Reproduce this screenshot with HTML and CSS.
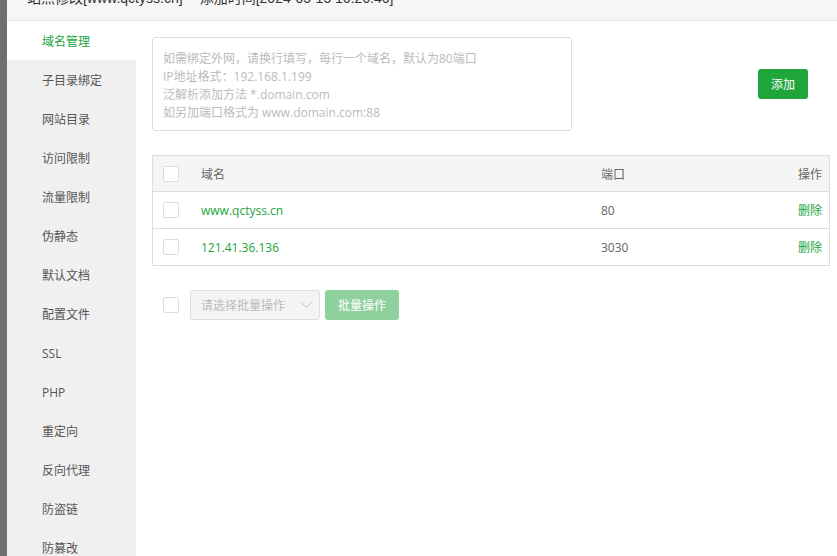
FILE: index.html
```html
<!DOCTYPE html>
<html lang="zh-CN">
<head>
<meta charset="utf-8">
<title>站点修改</title>
<link rel="stylesheet" href="styles.css">
</head>
<body>
<div class="app">
  <div class="strip"></div>
  <div class="main">
    <div class="header"><span class="title">站点修改[www.qctyss.cn] -- 添加时间[2024-05-15 16:26:46]</span></div>
    <div class="body">
      <ul class="side">
        <li class="active">域名管理</li>
        <li>子目录绑定</li>
        <li>网站目录</li>
        <li>访问限制</li>
        <li>流量限制</li>
        <li>伪静态</li>
        <li>默认文档</li>
        <li>配置文件</li>
        <li>SSL</li>
        <li>PHP</li>
        <li>重定向</li>
        <li>反向代理</li>
        <li>防盗链</li>
        <li>防篡改</li>
      </ul>
      <div class="content">
        <div class="add-row">
          <div class="textarea">
            <div>如需绑定外网，请换行填写，每行一个域名，默认为80端口</div>
            <div>IP地址格式：192.168.1.199</div>
            <div>泛解析添加方法 *.domain.com</div>
            <div>如另加端口格式为 www.domain.com:88</div>
          </div>
          <button class="btn-add">添加</button>
        </div>
        <div class="table">
          <div class="tr th">
            <div class="cb-cell"><span class="cb"></span></div>
            <div class="c-domain">域名</div>
            <div class="c-port">端口</div>
            <div class="c-op">操作</div>
          </div>
          <div class="tr">
            <div class="cb-cell"><span class="cb"></span></div>
            <div class="c-domain green">www.qctyss.cn</div>
            <div class="c-port">80</div>
            <div class="c-op green">删除</div>
          </div>
          <div class="tr">
            <div class="cb-cell"><span class="cb"></span></div>
            <div class="c-domain green">121.41.36.136</div>
            <div class="c-port">3030</div>
            <div class="c-op green">删除</div>
          </div>
        </div>
        <div class="batch">
          <span class="cb"></span>
          <div class="select"><span>请选择批量操作</span>
            <svg width="11" height="7" viewBox="0 0 11 7"><path d="M0.5 0.5 L5.5 5.5 L10.5 0.5" fill="none" stroke="#c0c0c0" stroke-width="1"/></svg>
          </div>
          <button class="btn-batch">批量操作</button>
        </div>
      </div>
    </div>
  </div>
</div>
</body>
</html>
```

FILE: styles.css
```css
* { box-sizing: border-box; }
html, body { margin: 0; padding: 0; }
body {
  font-family: "Open Sans", "Noto Sans CJK SC", sans-serif;
  font-size: 12px;
  color: #555;
  background: #fff;
  width: 837px;
  height: 556px;
  overflow: hidden;
}
.app { display: flex; height: 556px; }
.strip { width: 7px; background: #6f6f6f; flex: none; }
.main { flex: 1; display: flex; flex-direction: column; min-width: 0; }
.header {
  height: 21px;
  background: #f6f6f6;
  border-bottom: 1px solid #e6e6e6;
  overflow: hidden;
  padding-left: 20px;
  flex: none;
}
.title {
  display: block;
  font-family: "Liberation Sans", "Noto Sans CJK SC", sans-serif;
  font-size: 14px;
  line-height: 20px;
  margin-top: -12px;
  color: #333;
  white-space: nowrap;
}
.body { flex: 1; display: flex; min-height: 0; }
.side {
  list-style: none;
  margin: 0;
  padding: 0;
  width: 129px;
  flex: none;
  background: #f0f0f0;
}
.side li {
  height: 39px;
  line-height: 37px;
  padding-top: 2px;
  padding-left: 35px;
  color: #555;
}
.side li.active { background: #fff; color: #20a53a; }
.content { flex: 1; padding: 16px 7px 0 16px; }
.add-row { display: flex; align-items: center; }
.textarea {
  width: 420px;
  height: 94px;
  border: 1px solid #ddd;
  border-radius: 3px;
  padding: 12px 10px 0;
  color: #bbb;
  line-height: 18px;
}
.btn-add {
  margin-left: auto;
  margin-right: 22px;
  width: 50px;
  height: 30px;
  border: 0;
  border-radius: 3px;
  background: #20a53a;
  color: #fff;
  font: inherit;
  font-size: 12px;
  padding: 0;
}
.table {
  margin-top: 24px;
  border: 1px solid #ddd;
  width: 678px;
}
.tr {
  display: flex;
  align-items: center;
  height: 37px;
  border-top: 1px solid #ddd;
  color: #666;
}
.tr.th { border-top: 0; height: 35px; background: #f5f5f5; }
.cb-cell { width: 48px; padding-left: 10px; display: flex; align-items: center; }
.cb {
  display: inline-block;
  width: 16px;
  height: 16px;
  border: 1px solid #ddd;
  border-radius: 2px;
  background: #fff;
}
.c-domain { width: 400px; }
.c-port { flex: 1; }
.c-op { padding-right: 7px; }
.green { color: #20a53a; }
.batch {
  margin-top: 24px;
  display: flex;
  align-items: center;
  padding-left: 11px;
}
.select {
  margin-left: 11px;
  width: 130px;
  height: 30px;
  border: 1px solid #ddd;
  border-radius: 3px;
  background: #f4f4f4;
  color: #bbb;
  display: flex;
  align-items: center;
  justify-content: space-between;
  padding: 0 7px 0 10px;
}
.btn-batch {
  margin-left: 5px;
  width: 74px;
  height: 30px;
  border: 0;
  border-radius: 3px;
  background: #8fd19d;
  color: #fff;
  font: inherit;
  font-size: 12px;
  padding: 0;
}
```
